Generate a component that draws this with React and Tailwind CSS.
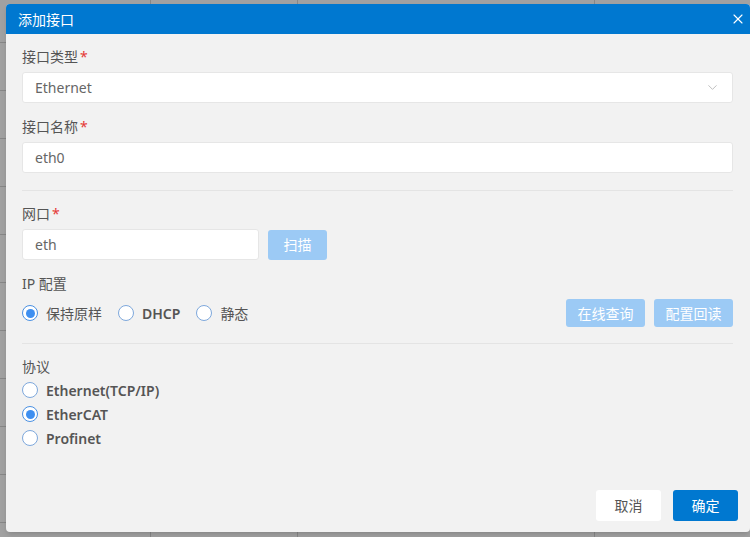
import React from 'react';
import { ChevronDown, X } from 'lucide-react';

const font = { fontFamily: '"Noto Sans", "Noto Sans CJK SC", sans-serif' };

function Radio({ checked, children, bold }) {
  return (
    <label className="flex items-center gap-2 h-6 cursor-pointer">
      <span
        className={
          'w-4 h-4 rounded-full border bg-white flex items-center justify-center ' +
          (checked ? 'border-[#4a90e2]' : 'border-[#7ea8dc]')
        }
      >
        {checked && <span className="w-[9px] h-[9px] rounded-full bg-[#3e8ff0]" />}
      </span>
      <span className={'text-[14px] text-[#555] ' + (bold ? 'font-semibold' : '')}>{children}</span>
    </label>
  );
}

function Label({ children, required }) {
  return (
    <div className="text-[14px] leading-5 text-[#555]">
      {children}
      {required && <span className="text-[#e53935] ml-0.5">*</span>}
    </div>
  );
}

function Background() {
  const rows = Array.from({ length: 12 });
  return (
    <div className="absolute inset-0 bg-white overflow-hidden">
      <div className="mt-[-5px]">
        {rows.map((_, i) => (
          <div key={i} className="grid grid-cols-[151px_147px_297px_1fr] h-[48px] border-b border-[#d6d6d6] text-[14px] text-[#333]">
            <div className="border-r border-[#d6d6d6] px-2 flex items-center">{i === 7 || i === 10 ? 'n' : ''}</div>
            <div className="border-r border-[#d6d6d6] px-2 flex items-center">{i === 11 ? '1.0.1' : ''}</div>
            <div className="border-r border-[#d6d6d6] px-3 flex items-center">{i === 11 ? '2026-07-22 11:29:16' : ''}</div>
            <div />
          </div>
        ))}
      </div>
      <div className="absolute inset-0 bg-black/[0.37]" />
    </div>
  );
}

export default function App() {
  return (
    <div className="relative w-[750px] h-[537px] overflow-hidden" style={font}>
      <Background />
      <div className="absolute left-[6px] top-[4px] w-[744px] h-[528px] rounded-[4px] bg-[#f2f2f2] flex flex-col overflow-hidden shadow-md">
        <div className="h-[30px] bg-[#0078d0] flex items-center justify-between pl-3 pr-[4px]">
          <span className="text-white text-[14px]">添加接口</span>
          <X size={16} strokeWidth={1.7} className="text-white" />
        </div>

        <div className="flex-1 flex flex-col pl-4 pr-[17px] pt-[13px]">
          <Label required>接口类型</Label>
          <div className="mt-[5px] h-[31px] bg-white border border-[#e6e6e6] rounded-[3px] flex items-center justify-between pl-3 pr-3">
            <span className="text-[14px] text-[#666]">Ethernet</span>
            <ChevronDown size={15} strokeWidth={1.2} className="text-[#aaa]" />
          </div>

          <div className="mt-[14px]">
            <Label required>接口名称</Label>
          </div>
          <div className="mt-[5px] h-[31px] bg-white border border-[#e6e6e6] rounded-[3px] flex items-center pl-3">
            <span className="text-[14px] text-[#666]">eth0</span>
          </div>

          <div className="mt-[17px] h-px bg-[#e4e4e4]" />

          <div className="mt-[13px]">
            <Label required>网口</Label>
          </div>
          <div className="mt-[5px] flex items-center gap-[9px]">
            <div className="w-[237px] h-[31px] bg-white border border-[#e6e6e6] rounded-[3px] flex items-center pl-3">
              <span className="text-[14px] text-[#666]">eth</span>
            </div>
            <button className="w-[59px] h-[30px] rounded-[3px] bg-[#9ccaf5] text-white text-[14px]">扫描</button>
          </div>

          <div className="mt-[14px]">
            <Label>IP 配置</Label>
          </div>
          <div className="mt-[5px] h-[28px] flex items-center justify-between">
            <div className="flex items-center gap-4">
              <Radio checked>保持原样</Radio>
              <Radio bold>DHCP</Radio>
              <Radio>静态</Radio>
            </div>
            <div className="flex items-center gap-[9px]">
              <button className="w-[79px] h-[28px] rounded-[3px] bg-[#9ccaf5] text-white text-[14px]">在线查询</button>
              <button className="w-[79px] h-[28px] rounded-[3px] bg-[#9ccaf5] text-white text-[14px]">配置回读</button>
            </div>
          </div>

          <div className="mt-[16px] h-px bg-[#e4e4e4]" />

          <div className="mt-[13px]">
            <Label>协议</Label>
          </div>
          <div className="mt-px flex flex-col">
            <Radio bold>Ethernet(TCP/IP)</Radio>
            <Radio bold checked>EtherCAT</Radio>
            <Radio bold>Profinet</Radio>
          </div>
        </div>

        <div className="flex justify-end gap-3 pr-3 pb-[11px]">
          <button className="w-[65px] h-[31px] rounded-[3px] bg-white text-[#555] text-[14px]">取消</button>
          <button className="w-[65px] h-[31px] rounded-[3px] bg-[#0078d0] text-white text-[14px]">确定</button>
        </div>
      </div>
    </div>
  );
}
